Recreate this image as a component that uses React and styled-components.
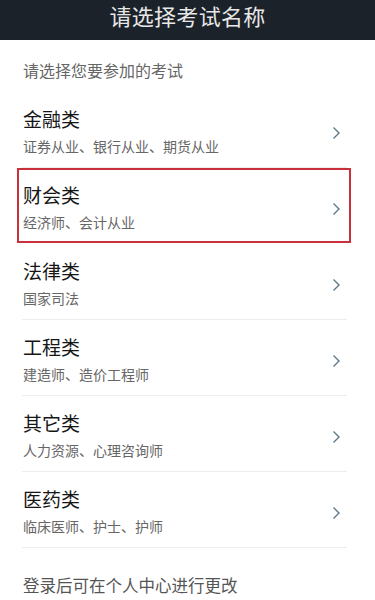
import React from "react";
import styled, { createGlobalStyle } from "styled-components";

const GlobalStyle = createGlobalStyle`
  body {
    margin: 0;
    background: #fff;
    font-family: "Noto Sans CJK SC", "Noto Sans", sans-serif;
  }
`;

const exams = [
  { name: "金融类", desc: "证券从业、银行从业、期货从业" },
  { name: "财会类", desc: "经济师、会计从业", selected: true },
  { name: "法律类", desc: "国家司法" },
  { name: "工程类", desc: "建造师、造价工程师" },
  { name: "其它类", desc: "人力资源、心理咨询师" },
  { name: "医药类", desc: "临床医师、护士、护师" },
];

function Chevron() {
  return (
    <svg width="9" height="14" viewBox="0 0 9 14">
      <path d="M1.5 1.5 L7 7 L1.5 12.5" fill="none" stroke="#5d7888" strokeWidth="1.4" />
    </svg>
  );
}

function App() {
  return (
    <Page>
      <GlobalStyle />
      <Header>请选择考试名称</Header>
      <Hint>请选择您要参加的考试</Hint>
      <List>
        {exams.map((item) => (
          <Row key={item.name} selected={item.selected}>
            <Texts>
              <Title>{item.name}</Title>
              <Desc>{item.desc}</Desc>
            </Texts>
            <Arrow>
              <Chevron />
            </Arrow>
          </Row>
        ))}
      </List>
      <Footer>登录后可在个人中心进行更改</Footer>
    </Page>
  );
}

export default App;

const Page = styled.div`
  width: 375px;
  height: 600px;
  overflow: hidden;
  background: #fff;
`;

const Header = styled.div`
  height: 40px;
  box-sizing: border-box;
  padding-top: 1px;
  background: #1c222a;
  color: #e8e8e8;
  font-size: 22px;
  line-height: 28px;
  text-align: center;
  letter-spacing: 0.3px;
`;

const Hint = styled.div`
  height: 52px;
  box-sizing: border-box;
  padding: 19px 0 0 23px;
  font-size: 16px;
  line-height: 22px;
  color: #666;
`;

const List = styled.div`
  margin: 0 28px 0 22px;
`;

const Row = styled.div`
  position: relative;
  height: 76px;
  box-sizing: border-box;
  border-bottom: 1px solid ${(p) => (p.selected ? "transparent" : "#ededed")};
  display: flex;
  align-items: center;
  padding: 0 6px 0 1px;

  &::after {
    content: "";
    display: ${(p) => (p.selected ? "block" : "none")};
    position: absolute;
    left: -5px;
    right: -4px;
    top: 0;
    bottom: 0;
    border: 2.5px solid #c8303b;
  }
`;

const Texts = styled.div`
  flex: 1;
  align-self: flex-start;
  padding-top: 16px;
`;

const Title = styled.div`
  font-size: 19px;
  line-height: 22px;
  color: #161616;
`;

const Desc = styled.div`
  margin-top: 6px;
  font-size: 14px;
  line-height: 20px;
  color: #666;
`;

const Arrow = styled.div`
  display: flex;
  margin-top: 6px;
`;

const Footer = styled.div`
  padding: 26px 0 0 23px;
  font-size: 16.5px;
  line-height: 22px;
  color: #555;
`;
